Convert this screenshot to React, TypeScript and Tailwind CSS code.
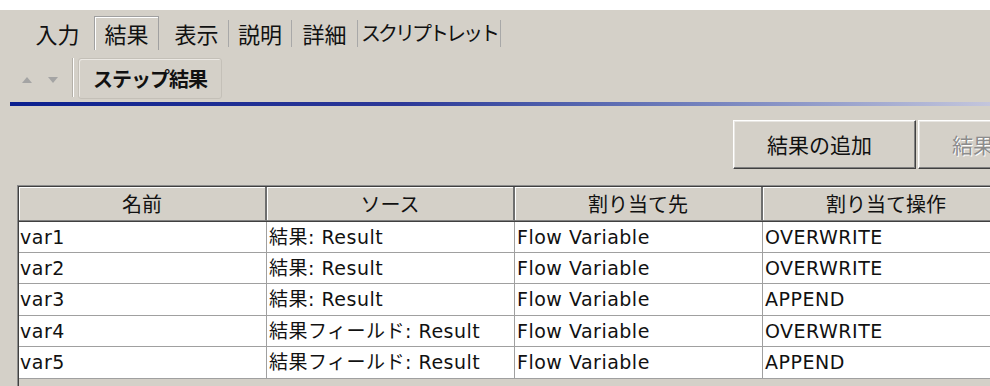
const jp = { fontFamily: '"Noto Sans CJK JP", sans-serif' };
const cell = { fontFamily: '"DejaVu Sans", "Noto Sans CJK JP", sans-serif' };

const rows = [
  { name: "var1", src: "結果: Result", dest: "Flow Variable", op: "OVERWRITE", h: "h-[31px]" },
  { name: "var2", src: "結果: Result", dest: "Flow Variable", op: "OVERWRITE", h: "h-[31px]" },
  { name: "var3", src: "結果: Result", dest: "Flow Variable", op: "APPEND", h: "h-[32px]" },
  { name: "var4", src: "結果フィールド: Result", dest: "Flow Variable", op: "OVERWRITE", h: "h-[31px]" },
  { name: "var5", src: "結果フィールド: Result", dest: "Flow Variable", op: "APPEND", h: "h-[32px]" },
];

const headers = ["名前", "ソース", "割り当て先", "割り当て操作"];

function TabSep() {
  return <div className="w-px h-[27px] mb-[3px] self-end bg-[#a8a8a8]" />;
}

function Tab({ label, className = "" }: { label: string; className?: string }) {
  return (
    <div className={`h-[34px] flex items-center justify-center text-[22px] text-[#111] ${className}`} style={jp}>
      {label}
    </div>
  );
}

function Button({ label, disabled }: { label: string; disabled?: boolean }) {
  return (
    <div
      className="w-[183px] h-[49px] flex items-center pl-[33px] bg-[#d4d0c8] border border-t-white border-l-white border-r-[#404040] border-b-[#404040] shadow-[inset_-1px_-1px_0_#808080,inset_1px_1px_0_#e8e6e2]"
      style={jp}
    >
      <span
        className={`text-[21px] ${disabled ? "text-[#8c8c8c] [text-shadow:1px_1px_0_#ffffff]" : "text-[#111]"}`}
      >
        {label}
      </span>
    </div>
  );
}

export default function App() {
  return (
    <div className="w-[990px] h-[386px] overflow-hidden bg-[#d4d0c8]">
      <div className="h-[10px] bg-white" />

      {/* tab bar */}
      <div className="flex items-end h-[40px] pl-[30px]">
        <Tab label="入力" className="w-[55px]" />
        <Tab
          label="結果"
          className="ml-[9px] w-[65px] border-t border-l border-r border-[#a0a0a0] shadow-[inset_1px_1px_0_#ffffff]"
        />
        <Tab label="表示" className="ml-[6px] w-[63px]" />
        <TabSep />
        <Tab label="説明" className="w-[62px]" />
        <TabSep />
        <Tab label="詳細" className="w-[65px]" />
        <TabSep />
        <Tab label="スクリプトレット" className="w-[142px] !text-[20px] tracking-[-3px]" />
        <TabSep />
      </div>

      {/* step toolbar */}
      <div className="flex items-start h-[52px] pt-[8px]">
        <svg className="ml-[22px] mt-[19px]" width="10" height="6" viewBox="0 0 10 6">
          <path d="M0 6 L5 0 L10 6 Z" fill="#a4a4a4" />
        </svg>
        <svg className="ml-[16px] mt-[19px]" width="10" height="6" viewBox="0 0 10 6">
          <path d="M0 0 L10 0 L5 6 Z" fill="#a4a4a4" />
        </svg>
        <div className="ml-[14px] w-px h-[39px] bg-[#b4b0a8] border-r border-white box-content" />
        <div
          className="ml-[4px] w-[144px] h-[41px] flex items-center justify-center rounded-[3px] border border-[#c4c0b8] shadow-[inset_1px_1px_0_#ece9e4]"
          style={jp}
        >
          <span className="text-[20px] font-bold tracking-[-1px] text-[#111]">ステップ結果</span>
        </div>
      </div>

      {/* title rule */}
      <div className="ml-[10px] h-[4px] bg-linear-to-r from-[#0a1f8f] via-[#2c3898] via-40% to-[#c4c6dc]" />

      {/* buttons */}
      <div className="flex mt-[14px] pl-[733px] w-[1300px]">
        <Button label="結果の追加" />
        <div className="ml-[2px]">
          <Button label="結果の削除" disabled />
        </div>
      </div>

      {/* table */}
      <div className="mt-[16px] ml-[17px] w-[1100px] border-t border-l border-[#8c8c8c]">
        <div className="border-t border-l border-[#404040]">
          <div className="flex h-[35px] border-b border-[#404040]">
            {headers.map((h) => (
              <div
                key={h}
                className="w-[248px] shrink-0 flex items-center justify-center bg-[#d4d0c8] border-r-2 border-r-[#6e6e6e] border-b border-b-[#808080] shadow-[inset_1px_1px_0_#ffffff] text-[20px] text-[#111]"
                style={jp}
              >
                {h}
              </div>
            ))}
          </div>
          {rows.map((r) => (
            <div key={r.name} className={`flex ${r.h} border-b border-[#a0a0a0] bg-white`}>
              {[r.name, r.src, r.dest, r.op].map((v, i) => (
                <div
                  key={i}
                  className={`w-[248px] shrink-0 flex items-center pl-[1px] border-r border-[#a0a0a0] text-[19px] tracking-[0.5px] text-[#111] whitespace-nowrap ${i === 0 ? "pl-[1px]" : "pl-[2px]"}`}
                  style={cell}
                >
                  {v}
                </div>
              ))}
            </div>
          ))}
          <div className="h-[10px] bg-[#d4d0c8]" />
        </div>
      </div>
    </div>
  );
}
